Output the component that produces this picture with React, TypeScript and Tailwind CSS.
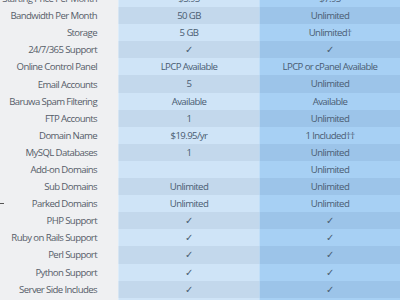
const rows: { label: string; basic: string; plus: string; dash?: boolean }[] = [
  { label: 'Starting Price Per Month', basic: '$5.95', plus: '$7.95' },
  { label: 'Bandwidth Per Month', basic: '50 GB', plus: 'Unlimited' },
  { label: 'Storage', basic: '5 GB', plus: 'Unlimited†' },
  { label: '24/7/365 Support', basic: '✓', plus: '✓' },
  { label: 'Online Control Panel', basic: 'LPCP Available', plus: 'LPCP or cPanel Available' },
  { label: 'Email Accounts', basic: '5', plus: 'Unlimited' },
  { label: 'Baruwa Spam Filtering', basic: 'Available', plus: 'Available' },
  { label: 'FTP Accounts', basic: '1', plus: 'Unlimited' },
  { label: 'Domain Name', basic: '$19.95/yr', plus: '1 Included††' },
  { label: 'MySQL Databases', basic: '1', plus: 'Unlimited' },
  { label: 'Add-on Domains', basic: '', plus: 'Unlimited' },
  { label: 'Sub Domains', basic: 'Unlimited', plus: 'Unlimited' },
  { label: 'Parked Domains', basic: 'Unlimited', plus: 'Unlimited', dash: true },
  { label: 'PHP Support', basic: '✓', plus: '✓' },
  { label: 'Ruby on Rails Support', basic: '✓', plus: '✓' },
  { label: 'Perl Support', basic: '✓', plus: '✓' },
  { label: 'Python Support', basic: '✓', plus: '✓' },
  { label: 'Server Side Includes', basic: '✓', plus: '✓' },
  { label: 'Cron Jobs', basic: '✓', plus: '✓' },
]

const App = () => {
  return (
    <div className="w-[400px] h-[300px] overflow-hidden bg-[#eff0f2] font-['Open_Sans',sans-serif] text-[9.6px] tracking-[-0.6px] whitespace-nowrap">
      <div className="-mt-[10px]">
        {rows.map((row, i) => {
          const dark = i % 2 === 1
          return (
            <div key={row.label} className="grid grid-cols-[118px_141px_141px] h-[17.1px] leading-[17px]">
              <div className="flex justify-between items-center pr-[21px] text-[#565d69]">
                {row.dash ? <span className="block w-[4px] h-px bg-[#555]" /> : <span />}
                <span>{row.label}</span>
              </div>
              <div className={`text-center text-[#4a5c72] border-l border-white/30 ${dark ? 'bg-[#c3d8ec]' : 'bg-[#cfe4f7]'}`}>
                {row.basic}
              </div>
              <div className={`text-center text-[#4a5c72] border-l border-white/30 ${dark ? 'bg-[#9cc4e9]' : 'bg-[#a7d0f4]'}`}>
                {row.plus}
              </div>
            </div>
          )
        })}
      </div>
    </div>
  )
}

export default App
